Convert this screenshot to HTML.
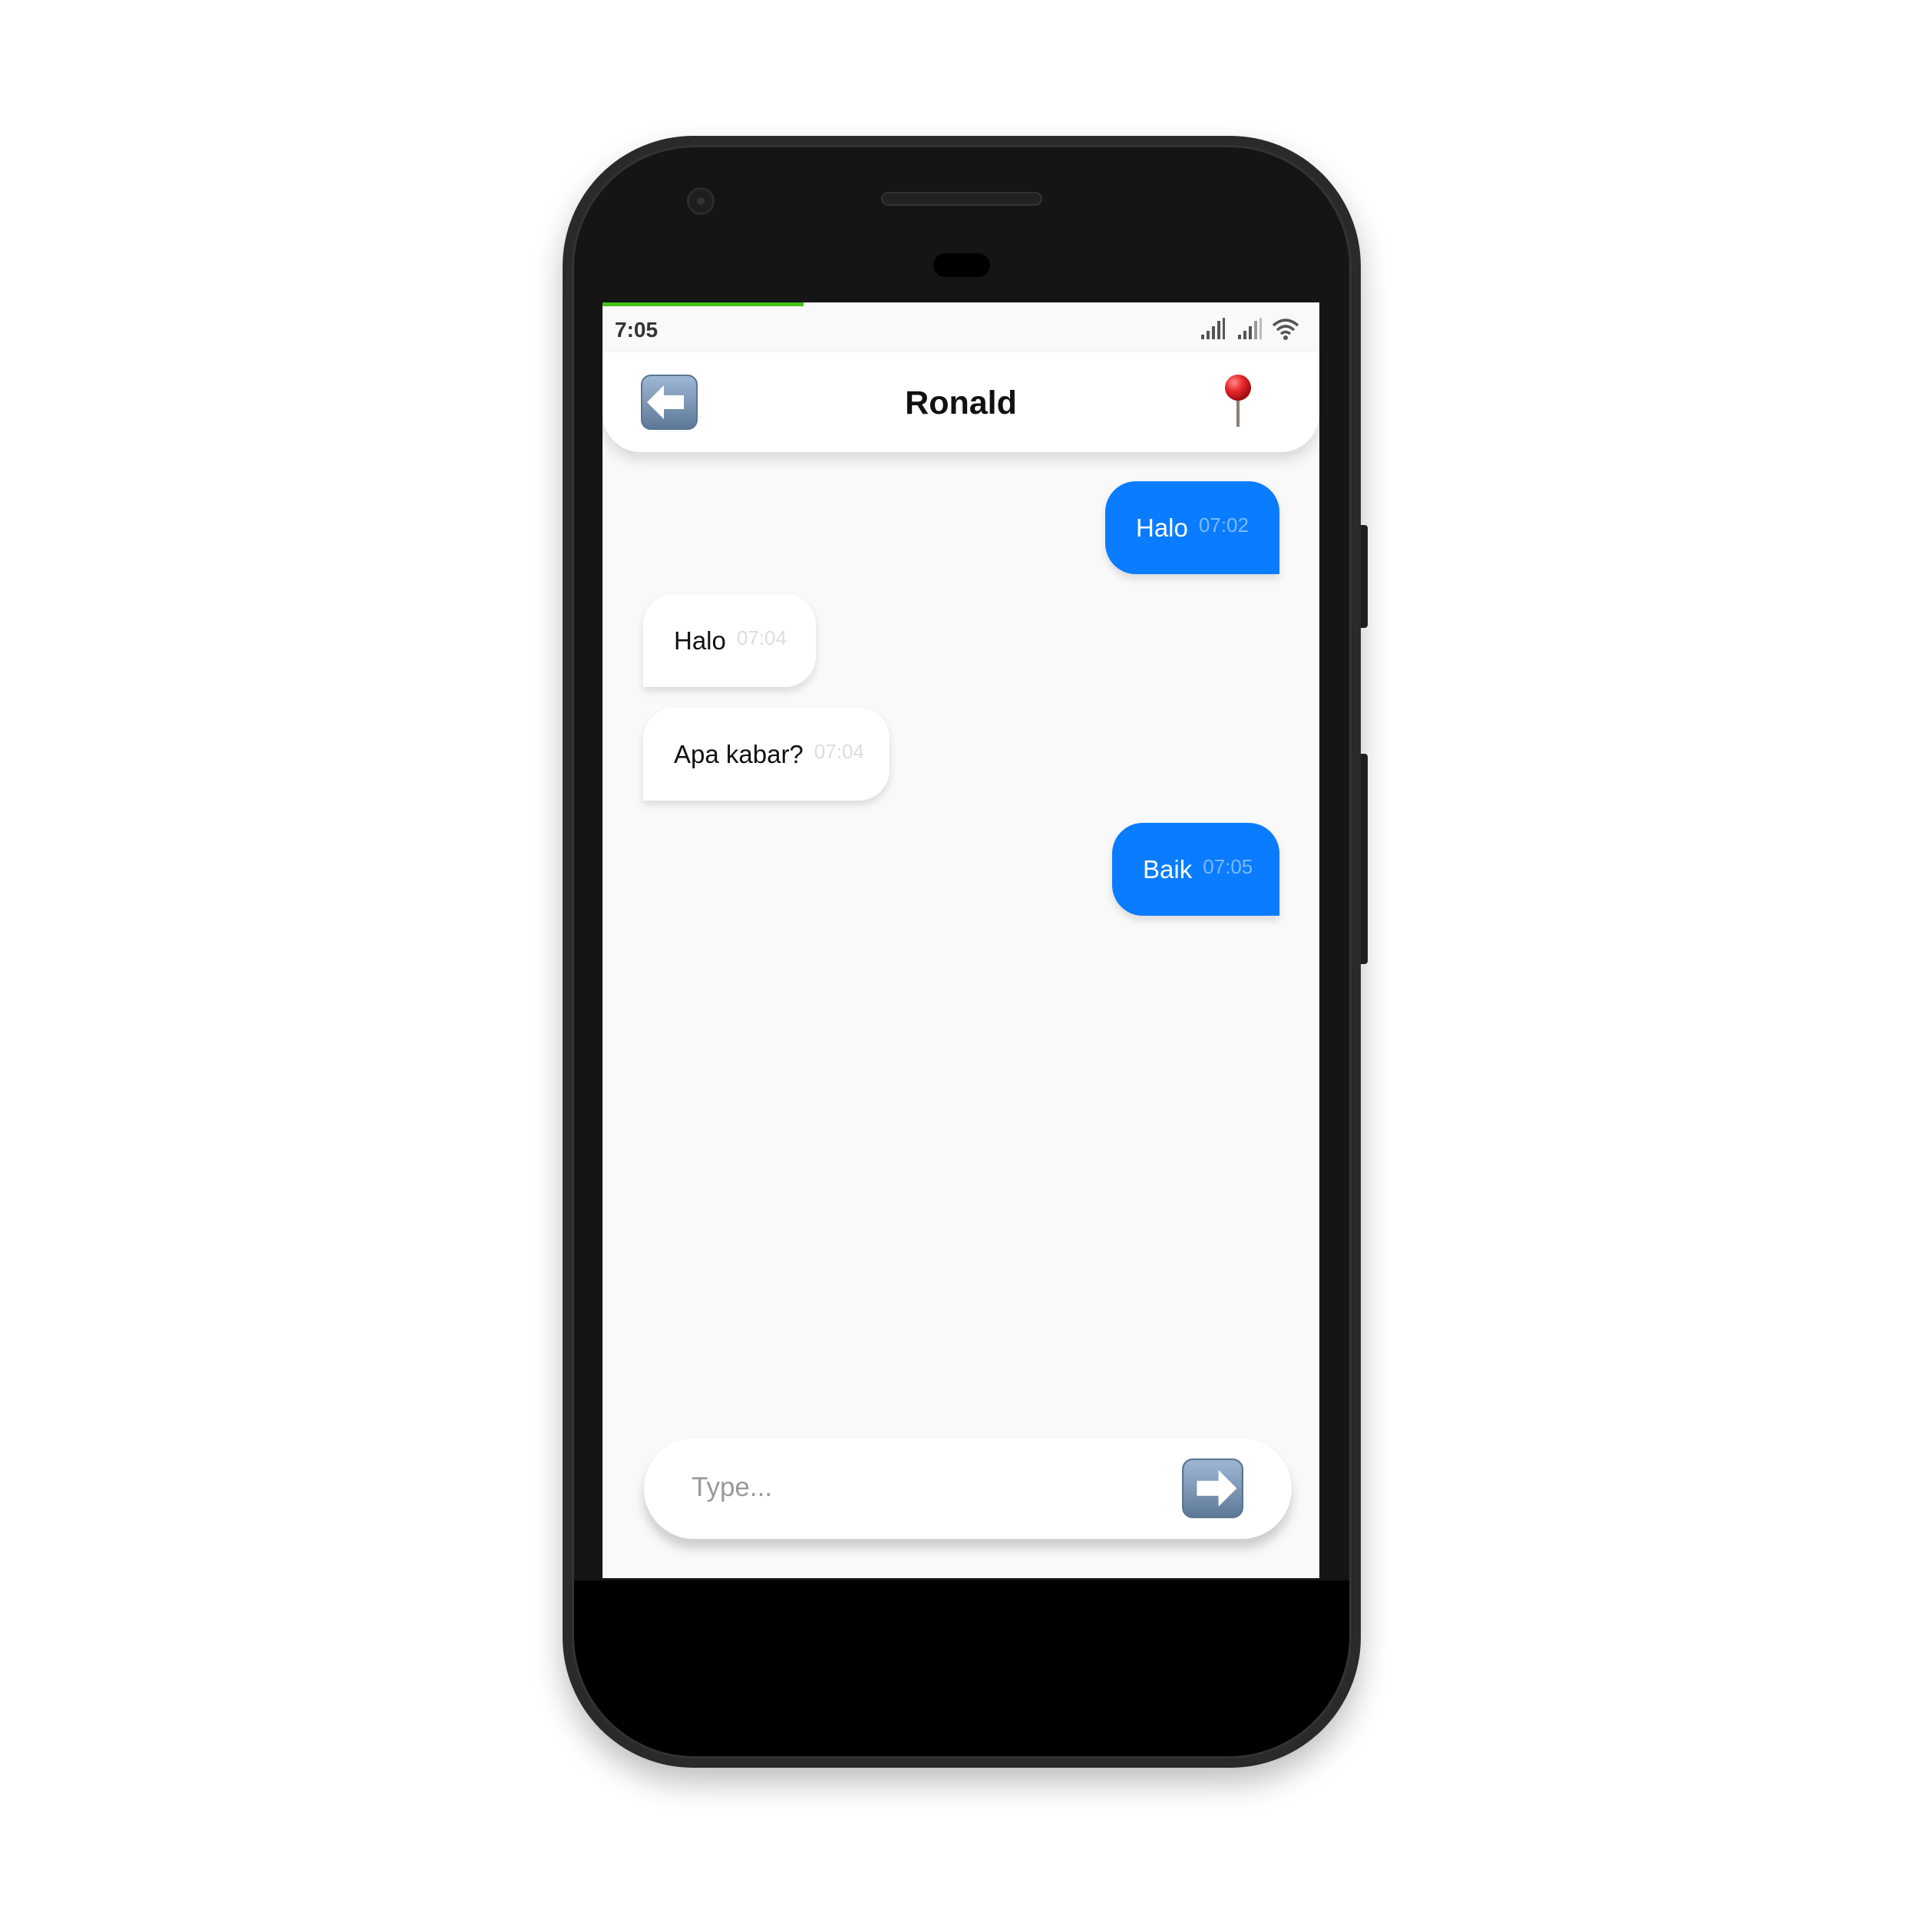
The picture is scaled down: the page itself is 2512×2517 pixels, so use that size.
<!DOCTYPE html>
<html><head><meta charset="utf-8"><style>
*{margin:0;padding:0;box-sizing:border-box}
body{width:2512px;height:2517px;background:#fff;position:relative;overflow:hidden;font-family:"Liberation Sans",sans-serif}
.abs{position:absolute}
.phone{left:733px;top:177px;width:1040px;height:2126px;border-radius:170px;background:#2a2a2a;box-shadow:0 20px 40px rgba(0,0,0,.25)}
.inner{left:745px;top:189px;width:1016px;height:2102px;border-radius:160px;background:linear-gradient(#151515 0,#151515 1867px,#000 1867px);border:3px solid #333}
.screen{left:785px;top:394px;width:934px;height:1662px;background:#f9f9f9;overflow:hidden}
.bubble{position:absolute;height:121px;display:flex;align-items:center;padding-left:40px;font-size:33px;box-shadow:0 6px 10px rgba(0,0,0,.12)}
.bubble .t{font-size:26px;margin-left:14px;margin-top:-6px}
.me{background:#0a7cff;color:#fff;border-radius:40px 40px 0 40px}
.me .t{color:#7db9ff}
.them{background:#fff;color:#111;border-radius:40px 40px 40px 0}
.them .t{color:#ddd}
</style></head><body>
<div class="abs" style="left:1521px;top:177px;width:14px;height:20px;background:#111"></div>
<div class="abs" style="left:1773px;top:684px;width:9px;height:134px;background:#222;border-radius:0 4px 4px 0"></div>
<div class="abs" style="left:1773px;top:982px;width:9px;height:274px;background:#222;border-radius:0 4px 4px 0"></div>
<div class="abs phone"></div>
<div class="abs inner"></div>
<div class="abs" style="left:895px;top:244px;width:36px;height:36px;border-radius:50%;background:#1e1e1e;border:3px solid #2c2c2c"></div>
<div class="abs" style="left:908px;top:257px;width:10px;height:10px;border-radius:50%;background:#333"></div>
<div class="abs" style="left:1148px;top:250px;width:210px;height:18px;border-radius:9px;background:#222;border:2px solid #333"></div>
<div class="abs" style="left:1216px;top:330px;width:74px;height:31px;border-radius:16px;background:#000"></div>
<div class="abs screen">
  <div class="abs" style="left:0;top:0;width:262px;height:5px;background:#46c21a"></div>
  <div class="abs" style="left:16px;top:20px;font-size:28px;font-weight:bold;color:#333">7:05</div>
  <svg class="abs" style="left:778px;top:18px" width="140" height="34" viewBox="0 0 140 34">
    <g fill="#555"><rect x="2" y="24" width="4" height="6"/><rect x="9" y="19" width="4" height="11"/><rect x="16" y="13" width="4" height="17"/><rect x="23" y="6" width="4" height="24"/><rect x="30" y="2" width="3" height="28"/>
    <rect x="50" y="24" width="4" height="6"/><rect x="57" y="19" width="4" height="11"/><rect x="64" y="13" width="4" height="17"/><rect x="71" y="6" width="4" height="24" fill="#999"/><rect x="78" y="2" width="3" height="28" fill="#bbb"/></g>
    <g fill="none" stroke="#555" stroke-width="3.5"><path d="M96 12 Q112 -2 128 12"/><path d="M101 18 Q112 8 123 18"/><path d="M106 23 Q112 18 118 23"/></g><circle cx="112" cy="28" r="3" fill="#555"/>
  </svg>
  <div class="abs" style="left:0;top:65px;width:934px;height:130px;background:#fff;border-radius:0 0 50px 50px;box-shadow:0 10px 18px rgba(0,0,0,.13)"></div>
  <svg class="abs" style="left:50px;top:94px" width="74" height="72" viewBox="0 0 74 72"><defs><linearGradient id="g" x1="0" y1="0" x2="0" y2="1"><stop offset="0" stop-color="#9fb8d6"/><stop offset="1" stop-color="#5d7896"/></linearGradient></defs><rect x="1" y="1" width="72" height="70" rx="12" fill="url(#g)" stroke="#5a7592" stroke-width="2"/><path d="M8 36 L30 14 L30 27 L56 27 L56 45 L30 45 L30 58 Z" fill="#fff"/></svg>
  <div class="abs" style="left:0;top:107px;width:934px;text-align:center;font-size:43px;font-weight:bold;color:#111">Ronald</div>
  <svg class="abs" style="left:805px;top:92px" width="46" height="72" viewBox="0 0 46 72"><defs><radialGradient id="r" cx=".35" cy=".3" r=".7"><stop offset="0" stop-color="#ff8a8a"/><stop offset=".5" stop-color="#e8262b"/><stop offset="1" stop-color="#9a0e12"/></radialGradient></defs><rect x="21" y="28" width="4" height="42" fill="#8a7d70"/><circle cx="23" cy="19" r="17" fill="url(#r)"/></svg>
  <div class="bubble me" style="left:655px;top:233px;width:227px">Halo<span class="t">07:02</span></div>
  <div class="bubble them" style="left:53px;top:380px;width:225px">Halo<span class="t">07:04</span></div>
  <div class="bubble them" style="left:53px;top:528px;width:321px">Apa kabar?<span class="t">07:04</span></div>
  <div class="bubble me" style="left:664px;top:678px;width:218px">Baik<span class="t">07:05</span></div>
  <div class="abs" style="left:54px;top:1480px;width:844px;height:131px;background:#fff;border-radius:66px;box-shadow:0 12px 14px rgba(0,0,0,.18)"></div>
  <div class="abs" style="left:116px;top:1524px;font-size:35px;color:#999">Type...</div>
  <svg class="abs" style="left:755px;top:1506px" width="80" height="78" viewBox="0 0 74 72"><rect x="1" y="1" width="72" height="70" rx="12" fill="url(#g)" stroke="#5a7592" stroke-width="2"/><path d="M66 36 L44 14 L44 27 L18 27 L18 45 L44 45 L44 58 Z" fill="#fff"/></svg>
</div>
</body></html>
